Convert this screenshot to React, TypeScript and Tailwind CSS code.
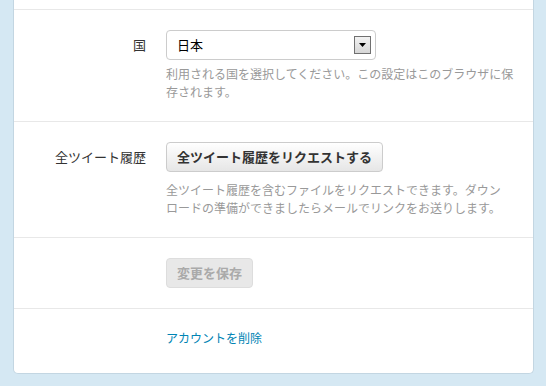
const jp = "font-['Noto_Sans_CJK_JP','Noto_Sans',sans-serif]";

function Row({
  label,
  children,
  last,
}: {
  label?: string;
  children: React.ReactNode;
  last?: boolean;
}) {
  return (
    <div
      className={`flex border-t border-[#e8e8e8] pt-5 ${last ? "pb-[26px]" : "pb-5"}`}
    >
      <div className="w-[132px] shrink-0 text-right text-[13px] leading-[30px] text-[#333]">
        {label}
      </div>
      <div className="ml-5 min-w-0 flex-1">{children}</div>
    </div>
  );
}

export default function App() {
  return (
    <div className={`min-h-[386px] bg-[#d5e8f3] pb-3 pl-[13px] pr-3 ${jp}`}>
      <div className="w-[521px] rounded-b-[5px] border-x border-b border-[#c3d6e2] bg-white">
        <div className="h-[9px]" />

        <Row label="国">
          <div className="flex h-[30px] w-[210px] items-center rounded-[4px] border border-[#ccc] pl-[10px] pr-[4px]">
            <span className="flex-1 text-[13px] text-black">日本</span>
            <span className="flex h-[18px] w-[17px] items-center justify-center border border-[#707070] bg-gradient-to-b from-[#f2f2f2] to-[#d6d6d6]">
              <svg width="7" height="4" viewBox="0 0 7 4">
                <path d="M0 0h7L3.5 4z" fill="#000" />
              </svg>
            </span>
          </div>
          <p className="mt-[5px] text-[12px] leading-[18px] text-[#999]">
            利用される国を選択してください。この設定はこのブラウザに保
            <br />
            存されます。
          </p>
        </Row>

        <Row label="全ツイート履歴">
          <button className="h-[30px] rounded-[4px] border border-[#ccc] bg-gradient-to-b from-white to-[#e6e6e6] px-[10px] text-[13px] font-bold text-[#333]">
            全ツイート履歴をリクエストする
          </button>
          <p className="mt-[9px] text-[12px] leading-[18px] text-[#999]">
            全ツイート履歴を含むファイルをリクエストできます。ダウン
            <br />
            ロードの準備ができましたらメールでリンクをお送りします。
          </p>
        </Row>

        <Row>
          <button
            disabled
            className="block h-[30px] rounded-[4px] border border-[#ddd] bg-[#e8e8e8] px-[10px] text-[13px] font-bold text-[#aaa]"
          >
            変更を保存
          </button>
        </Row>

        <Row last>
          <a href="#" className="block text-[12px] leading-[18px] text-[#0084b4]">
            アカウントを削除
          </a>
        </Row>
      </div>
    </div>
  );
}
